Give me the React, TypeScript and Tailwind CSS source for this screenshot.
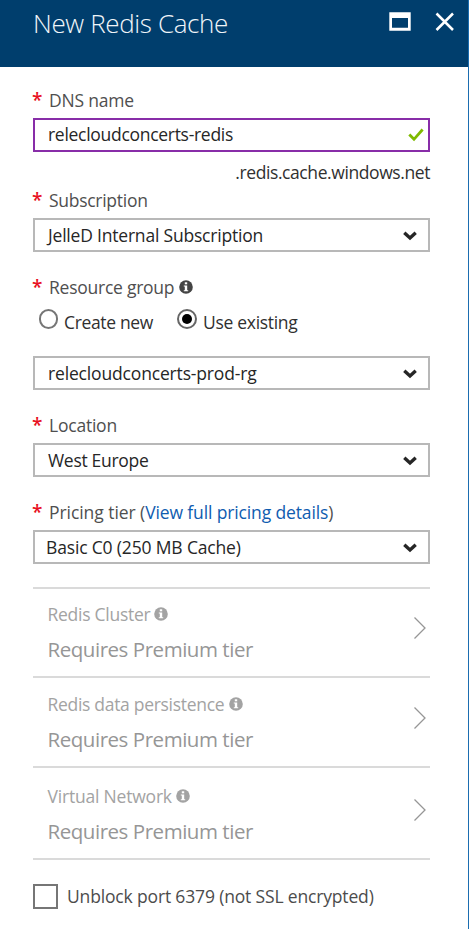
import type { ReactNode } from "react";

function InfoIcon({ className = "" }: { className?: string }) {
  return (
    <svg width="14" height="14" viewBox="0 0 14 14" className={`shrink-0 ${className}`}>
      <circle cx="7" cy="7" r="6.8" fill="currentColor" />
      <rect x="5.8" y="2.3" width="2.4" height="2" fill="#fff" />
      <path d="M4.8 5.6H8.2V10.3H9.2V11.3H4.8V10.3H5.8V6.6H4.8Z" fill="#fff" />
    </svg>
  );
}

function Chevron() {
  return (
    <svg width="14" height="10" viewBox="0 0 14 10" className="mr-[11px] mt-px shrink-0" fill="none" stroke="#262626" strokeWidth="3.4">
      <path d="M1.3 1.8L7 7L12.7 1.8" />
    </svg>
  );
}

function Label({ children }: { children: ReactNode }) {
  return (
    <div className="flex h-6 items-center leading-6 text-[#4f4f4f]">
      <span className="-ml-px w-[17px] shrink-0 text-[19px] font-semibold text-[#e81123]">*</span>
      {children}
    </div>
  );
}

function Select({ children, className = "" }: { children: ReactNode; className?: string }) {
  return (
    <div className={`flex h-[34px] items-center justify-between border-2 border-[#b8b8b8] pl-[13px] text-[#262626] ${className}`}>
      {children}
      <Chevron />
    </div>
  );
}

function Premium({ children, className, arrow }: { children: ReactNode; className: string; arrow: string }) {
  return (
    <div className={`flex justify-between border-b-2 border-[#dadada] pl-[14.5px] ${className}`}>
      <div>
        <div className="flex h-6 items-center leading-6 text-[#a3a3a3]">{children}</div>
        <div className="mt-2 text-[20.5px] leading-[30px] tracking-[-0.46px] text-[#969696]">Requires Premium tier</div>
      </div>
      <svg width="12" height="22" viewBox="0 0 12 22" className={`mr-1 ${arrow}`} fill="none" stroke="#969696" strokeWidth="1.3">
        <path d="M0.5 0.5L11 11L0.5 21.5" />
      </svg>
    </div>
  );
}

export default function App() {
  return (
    <div className="h-[929px] w-[469px] overflow-hidden whitespace-nowrap border-r border-[#1b6db0] bg-white font-['Open_Sans','Noto_Sans',sans-serif] text-[17.5px]">
      <header className="flex h-[67px] justify-between bg-[#003e6d] pl-[33px] text-[#f0f5f9]">
        <h1 className="mt-[3px] text-[26px] font-light leading-10 tracking-[-0.36px]">New Redis Cache</h1>
        <div className="mr-[13px] mt-3 flex">
          <svg width="22" height="19" viewBox="0 0 22 19">
            <path fillRule="evenodd" d="M0.3 0.3H21.7V18.7H0.3ZM3 6V15.8H19V6Z" fill="#fff" />
          </svg>
          <svg width="20" height="20" viewBox="0 0 20 20" className="ml-[24px]" fill="none" stroke="#fff" strokeWidth="2.5">
            <path d="M1.5 1.5L18 18M18 1.5L1.5 18" />
          </svg>
        </div>
      </header>

      <main className="ml-[33px] w-[397px] pt-[21px]">
        <Label><span className="tracking-[-0.2px]">DNS name</span></Label>
        <div className="mt-1.5 flex h-[34px] items-center justify-between border-2 border-[#882da8] pb-0.5 pl-[13px] text-[#262626]">
          <span className="tracking-[-0.29px]">relecloudconcerts-redis</span>
          <svg width="16" height="14" viewBox="0 0 16 14" className="mr-1 mt-0.5" fill="none" stroke="#7fba00" strokeWidth="2.8">
            <path d="M1.3 6.5L6 11.3L14.6 1.5" />
          </svg>
        </div>
        <div className="mt-2 h-6 text-right leading-6 text-[#303030]"><span className="tracking-[-0.41px]">.redis.cache.windows.net</span></div>

        <div className="mt-1"><Label><span className="tracking-[-0.28px]">Subscription</span></Label></div>
        <Select className="mt-1.5"><span className="tracking-[-0.2px]">JelleD Internal Subscription</span></Select>

        <div className="mt-[23px]">
          <Label><span className="tracking-[-0.25px]">Resource group</span><InfoIcon className="ml-[5px] text-[#444]" /></Label>
        </div>
        <div className="mt-[11px] flex h-6 leading-6 text-[#303030]">
          <span className="ml-1.5 -mt-px h-5 w-[19px] rounded-full border-2 border-[#767676]" />
          <span className="ml-1.5 w-[113px] tracking-[-0.35px]">Create new</span>
          <span className="-mt-px flex h-5 w-5 items-center justify-center rounded-full border-2 border-[#666]">
            <span className="h-2.5 w-2.5 rounded-full bg-black" />
          </span>
          <span className="ml-1.5 tracking-[-0.3px]">Use existing</span>
        </div>
        <Select className="mt-[22px]"><span className="tracking-[-0.16px]">relecloudconcerts-prod-rg</span></Select>

        <div className="mt-[23px]"><Label><span className="tracking-[-0.22px]">Location</span></Label></div>
        <Select className="mt-1.5"><span className="tracking-[-0.3px]">West Europe</span></Select>

        <div className="mt-[23px]">
          <Label>
            <span className="tracking-[-0.06px]">Pricing tier (</span>
            <a className="tracking-[-0.13px] text-[#0f5cb0]">View full pricing details</a>
            <span>)</span>
          </Label>
        </div>
        <Select className="mt-1.5"><span className="-ml-0.5 tracking-[-0.16px]">Basic C0 (250 MB Cache)</span></Select>

        <section className="mt-[23px] border-t-2 border-[#dadada]">
          <Premium className="h-[89px] pt-[13px]" arrow="mt-[15px]"><span className="tracking-[-0.27px]">Redis Cluster</span><InfoIcon className="ml-1" /></Premium>
          <Premium className="h-[90px] pt-[14px]" arrow="mt-[15px]"><span className="tracking-[-0.3px]">Redis data persistence</span><InfoIcon className="ml-[5px]" /></Premium>
          <Premium className="h-[92px] pt-4" arrow="mt-[15px]"><span className="tracking-[-0.2px]">Virtual Network</span><InfoIcon className="ml-1" /></Premium>
        </section>

        <div className="mt-6 flex h-[25px] text-[#4c4c4c]">
          <span className="h-[25px] w-[25px] border-2 border-[#767676]" />
          <span className="ml-[9px] leading-6 tracking-[-0.16px]">Unblock port 6379 (not SSL encrypted)</span>
        </div>
      </main>
    </div>
  );
}
